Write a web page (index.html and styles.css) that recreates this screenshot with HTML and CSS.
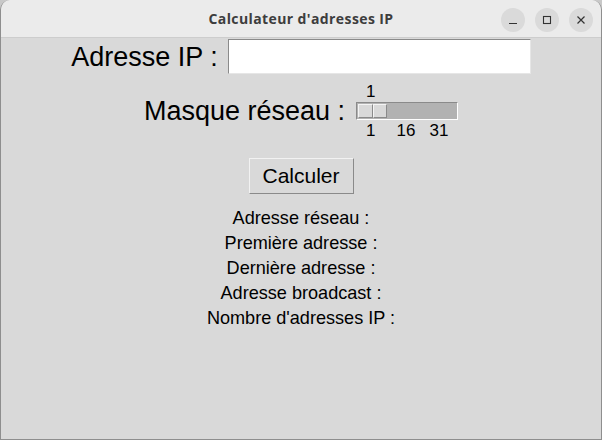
FILE: index.html
```html
<!DOCTYPE html>
<html lang="fr">
<head>
  <meta charset="UTF-8" />
  <meta name="viewport" content="width=device-width, initial-scale=1.0" />
  <title>Calculateur d'adresses IP</title>
  <link rel="stylesheet" href="styles.css">
</head>
<body>
  <div class="window">
    <div class="titlebar">
      <span class="title">Calculateur d'adresses IP</span>
      <div class="controls">
        <span class="ctl">
          <svg width="10" height="10" viewBox="0 0 10 10"><path d="M1 8.5h8" stroke="#333" stroke-width="1.2"/></svg>
        </span>
        <span class="ctl">
          <svg width="10" height="10" viewBox="0 0 10 10"><rect x="1.5" y="1.5" width="7" height="7" fill="none" stroke="#333" stroke-width="1.1"/></svg>
        </span>
        <span class="ctl">
          <svg width="10" height="10" viewBox="0 0 10 10"><path d="M1.5 1.5l7 7M8.5 1.5l-7 7" stroke="#333" stroke-width="1.2"/></svg>
        </span>
      </div>
    </div>

    <div class="content">
      <div class="row ip-row">
        <label class="big-label" for="ip">Adresse IP :</label>
        <input type="text" id="ip" class="entry">
      </div>

      <div class="row mask-row">
        <span class="big-label">Masque réseau :</span>
        <div class="scale">
          <div class="scale-value">1</div>
          <div class="trough">
            <div class="handle"><span></span><span></span></div>
          </div>
          <div class="ticks">
            <span>1</span><span>16</span><span>31</span>
          </div>
        </div>
      </div>

      <button class="btn">Calculer</button>

      <div class="results">
        <p>Adresse réseau :</p>
        <p>Première adresse :</p>
        <p>Dernière adresse :</p>
        <p>Adresse broadcast :</p>
        <p>Nombre d'adresses IP :</p>
      </div>
    </div>
  </div>
</body>
</html>
```

FILE: styles.css
```css
/* Base */
* { margin: 0; padding: 0; box-sizing: border-box; }
body { background: #c8c8c8; font-family: "Liberation Sans", Arial, sans-serif; color: #000; }

/* Window frame */
.window { width: 602px; height: 440px; background: #d9d9d9; border: 1px solid #8e8e8e; border-top: none; border-radius: 10px 10px 0 0; overflow: hidden; display: flex; flex-direction: column; }

/* Title bar */
.titlebar { height: 38px; flex: none; background: #ebebeb; border-bottom: 1px solid #cdcdcd; display: flex; align-items: center; justify-content: center; position: relative; }
.title { font-family: "Open Sans", "DejaVu Sans", sans-serif; font-weight: bold; font-size: 14px; color: #3d3d3d; letter-spacing: 0.4px; }
.controls { position: absolute; right: 8px; top: 8px; display: flex; gap: 10px; }
.ctl { width: 24px; height: 24px; border-radius: 50%; background: #dadada; display: flex; align-items: center; justify-content: center; }

/* Content */
.content { display: flex; flex-direction: column; align-items: center; padding-top: 1px; }
.row { display: flex; align-items: center; }
.big-label { font-size: 27px; line-height: 30px; }

.ip-row { gap: 10px; }
.entry { width: 303px; height: 35px; background: #fff; border: 1px solid; border-color: #8a8a8a #e6e6e6 #e6e6e6 #8a8a8a; outline: none; font-size: 18px; font-family: inherit; padding: 0 4px; }

.mask-row { gap: 11px; margin-top: 8px; }
.scale { width: 102px; display: flex; flex-direction: column; align-items: stretch; font-size: 17px; }
.scale-value { height: 20px; line-height: 20px; padding-left: 10px; }
.trough { height: 18px; background: #b2b2b2; border: 1px solid; border-color: #8a8a8a #fff #fff #8a8a8a; padding: 1px; display: flex; }
.handle { width: 29px; height: 14px; display: flex; }
.handle span { flex: 1; background: #d9d9d9; border: 1px solid; border-color: #f4f4f4 #8a8a8a #8a8a8a #f4f4f4; }
.ticks { height: 20px; line-height: 22px; display: flex; }
.ticks span:nth-child(1) { margin-left: 10px; }
.ticks span:nth-child(2) { margin-left: 21px; }
.ticks span:nth-child(3) { margin-left: 14px; }

/* Button */
.btn { margin-top: 18px; width: 105px; height: 36px; background: #d9d9d9; border: 1px solid; border-color: #f2f2f2 #8a8a8a #8a8a8a #f2f2f2; font-family: inherit; font-size: 21px; color: #000; }

/* Results */
.results { margin-top: 12px; text-align: center; font-size: 18.1px; line-height: 25px; }
```
